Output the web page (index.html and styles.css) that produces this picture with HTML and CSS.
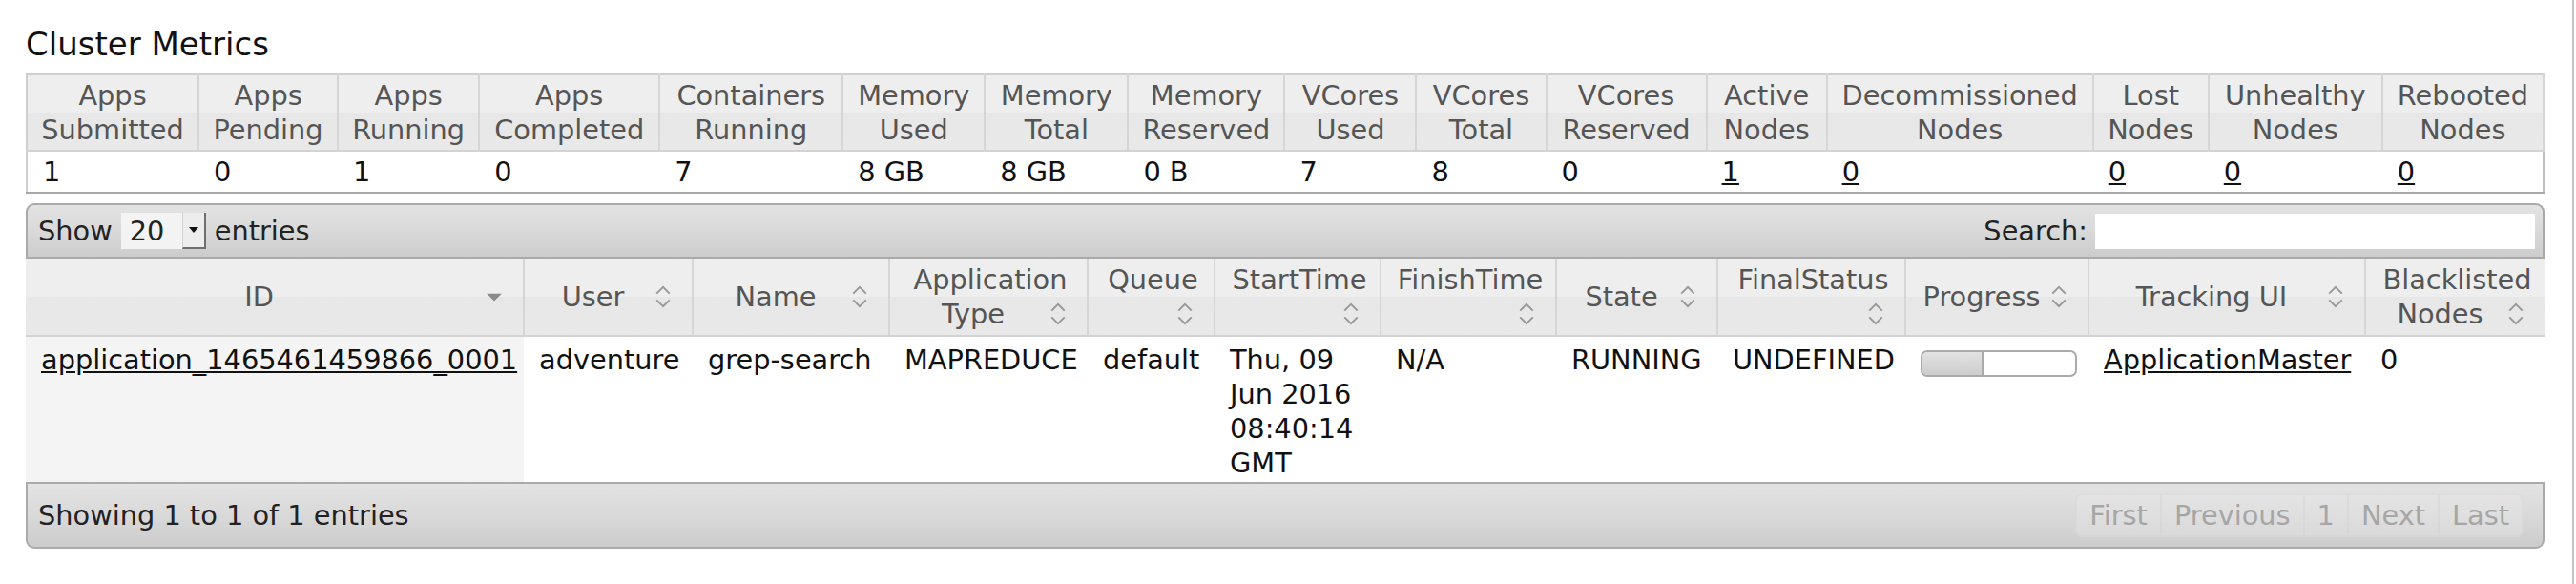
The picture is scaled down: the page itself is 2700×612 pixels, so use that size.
FILE: index.html
```html
<!DOCTYPE html>
<html>
<head>
<meta charset="utf-8">
<title>Cluster Metrics</title>
<link rel="stylesheet" href="styles.css">
</head>
<body>
<div class="page">
  <h3 class="title">Cluster Metrics</h3>
  <table class="metrics">
    <colgroup><col><col><col><col><col><col><col><col><col><col><col><col><col><col><col><col></colgroup>
    <thead>
      <tr>
        <th>Apps Submitted</th><th>Apps Pending</th><th>Apps Running</th><th>Apps Completed</th>
        <th>Containers Running</th><th>Memory Used</th><th>Memory Total</th><th>Memory Reserved</th>
        <th>VCores Used</th><th>VCores Total</th><th>VCores Reserved</th><th>Active Nodes</th>
        <th>Decommissioned Nodes</th><th>Lost Nodes</th><th>Unhealthy Nodes</th><th>Rebooted Nodes</th>
      </tr>
    </thead>
    <tbody>
      <tr>
        <td>1</td><td>0</td><td>1</td><td>0</td><td>7</td><td>8 GB</td><td>8 GB</td><td>0 B</td>
        <td>7</td><td>8</td><td>0</td><td><a href="#">1</a></td><td><a href="#">0</a></td>
        <td><a href="#">0</a></td><td><a href="#">0</a></td><td><a href="#">0</a></td>
      </tr>
    </tbody>
  </table>

  <div class="dt">
    <div class="bar bar-top">
      <div class="length">Show <span class="select"><span class="select-val">20</span><span class="select-btn"><svg width="10" height="6" viewBox="0 0 10 6"><polygon points="0,0 10,0 5,6" fill="#111"/></svg></span></span> entries</div>
      <div class="filter">Search: <span class="search"></span></div>
    </div>
    <table class="apps">
      <colgroup><col><col><col><col><col><col><col><col><col><col><col><col></colgroup>
      <thead>
        <tr>
          <th>ID<span class="sicon"><svg width="36" height="36" viewBox="0 0 16 16"><polygon points="4.5,6.5 11.5,6.5 8,10" fill="#8a8a8a"/></svg></span></th>
          <th>User<span class="sicon"><svg width="36" height="36" viewBox="0 0 16 16"><path d="M5 6.5 L8 3.5 L11 6.5 M5 9.5 L8 12.5 L11 9.5" fill="none" stroke="#999" stroke-width="0.9"/></svg></span></th>
          <th>Name<span class="sicon"><svg width="36" height="36" viewBox="0 0 16 16"><path d="M5 6.5 L8 3.5 L11 6.5 M5 9.5 L8 12.5 L11 9.5" fill="none" stroke="#999" stroke-width="0.9"/></svg></span></th>
          <th>Application Type<span class="sicon"><svg width="36" height="36" viewBox="0 0 16 16"><path d="M5 6.5 L8 3.5 L11 6.5 M5 9.5 L8 12.5 L11 9.5" fill="none" stroke="#999" stroke-width="0.9"/></svg></span></th>
          <th>Queue<span class="sicon"><svg width="36" height="36" viewBox="0 0 16 16"><path d="M5 6.5 L8 3.5 L11 6.5 M5 9.5 L8 12.5 L11 9.5" fill="none" stroke="#999" stroke-width="0.9"/></svg></span></th>
          <th>StartTime<span class="sicon"><svg width="36" height="36" viewBox="0 0 16 16"><path d="M5 6.5 L8 3.5 L11 6.5 M5 9.5 L8 12.5 L11 9.5" fill="none" stroke="#999" stroke-width="0.9"/></svg></span></th>
          <th>FinishTime<span class="sicon"><svg width="36" height="36" viewBox="0 0 16 16"><path d="M5 6.5 L8 3.5 L11 6.5 M5 9.5 L8 12.5 L11 9.5" fill="none" stroke="#999" stroke-width="0.9"/></svg></span></th>
          <th>State<span class="sicon"><svg width="36" height="36" viewBox="0 0 16 16"><path d="M5 6.5 L8 3.5 L11 6.5 M5 9.5 L8 12.5 L11 9.5" fill="none" stroke="#999" stroke-width="0.9"/></svg></span></th>
          <th>FinalStatus<span class="sicon"><svg width="36" height="36" viewBox="0 0 16 16"><path d="M5 6.5 L8 3.5 L11 6.5 M5 9.5 L8 12.5 L11 9.5" fill="none" stroke="#999" stroke-width="0.9"/></svg></span></th>
          <th>Progress<span class="sicon"><svg width="36" height="36" viewBox="0 0 16 16"><path d="M5 6.5 L8 3.5 L11 6.5 M5 9.5 L8 12.5 L11 9.5" fill="none" stroke="#999" stroke-width="0.9"/></svg></span></th>
          <th>Tracking UI<span class="sicon"><svg width="36" height="36" viewBox="0 0 16 16"><path d="M5 6.5 L8 3.5 L11 6.5 M5 9.5 L8 12.5 L11 9.5" fill="none" stroke="#999" stroke-width="0.9"/></svg></span></th>
          <th>Blacklisted Nodes<span class="sicon"><svg width="36" height="36" viewBox="0 0 16 16"><path d="M5 6.5 L8 3.5 L11 6.5 M5 9.5 L8 12.5 L11 9.5" fill="none" stroke="#999" stroke-width="0.9"/></svg></span></th>
        </tr>
      </thead>
      <tbody>
        <tr>
          <td class="sorted"><a href="#">application_1465461459866_0001</a></td>
          <td>adventure</td>
          <td>grep-search</td>
          <td>MAPREDUCE</td>
          <td>default</td>
          <td>Thu, 09 Jun 2016 08:40:14 GMT</td>
          <td>N/A</td>
          <td>RUNNING</td>
          <td>UNDEFINED</td>
          <td><div class="progress" title="40.0%"><div class="progress-value" style="width:40%"></div></div></td>
          <td><a href="#">ApplicationMaster</a></td>
          <td>0</td>
        </tr>
      </tbody>
    </table>
    <div class="bar bar-bottom">
      <div class="info">Showing 1 to 1 of 1 entries</div>
      <div class="paginate">
        <span class="pbtn pfirst">First</span><span class="pbtn">Previous</span><span class="pbtn">1</span><span class="pbtn">Next</span><span class="pbtn plast">Last</span>
      </div>
    </div>
  </div>
</div>
</body>
</html>
```

FILE: styles.css
```css
html, body {
  margin: 0;
  padding: 0;
  background: #fff;
}

body {
  font-family: "DejaVu Sans", sans-serif;
  font-size: 28.8px;
  color: #222;
}

.page {
  box-sizing: border-box;
  width: 2698px;
  height: 612px;
  padding: 26px 0 0 27px;
  border-right: 2px solid #c4c4c4;
}

.title {
  margin: 0;
  font-size: 34px;
  font-weight: normal;
  line-height: 40px;
  color: #111;
}

a {
  color: #111;
  text-decoration: underline;
}

/* ---------- metrics ---------- */
.metrics {
  margin-top: 11px;
  width: 2640px;
  table-layout: fixed;
  border-collapse: collapse;
  border: 2px solid #cfcfcf;
  border-bottom-color: #a8a8a8;
  border-right-color: #bdbdbd;
}

.metrics col:nth-child(1) { width: 180px; }
.metrics col:nth-child(2) { width: 146px; }
.metrics col:nth-child(3) { width: 148px; }
.metrics col:nth-child(4) { width: 189px; }
.metrics col:nth-child(5) { width: 192px; }
.metrics col:nth-child(6) { width: 149px; }
.metrics col:nth-child(7) { width: 150px; }
.metrics col:nth-child(8) { width: 164px; }
.metrics col:nth-child(9) { width: 138px; }
.metrics col:nth-child(10) { width: 136px; }
.metrics col:nth-child(11) { width: 168px; }
.metrics col:nth-child(12) { width: 126px; }
.metrics col:nth-child(13) { width: 279px; }
.metrics col:nth-child(14) { width: 121px; }
.metrics col:nth-child(15) { width: 182px; }
.metrics col:nth-child(16) { width: 169px; }

.metrics th {
  font-weight: normal;
  color: #555;
  padding: 3px 0;
  line-height: 36px;
  text-align: center;
  vertical-align: middle;
  background: linear-gradient(to bottom, #eeeeee 0, #eeeeee 50%, #e7e7e7 50%, #e9e9e9 100%);
  border-right: 2px solid #d6d6d6;
  border-bottom: 2px solid #d3d3d3;
}

.metrics td {
  padding: 4px 16px;
  line-height: 34px;
  color: #111;
  background: #fff;
}

/* ---------- datatable wrapper ---------- */
.dt {
  margin-top: 10px;
  width: 2640px;
}

.bar {
  display: flex;
  align-items: center;
  justify-content: space-between;
  box-sizing: border-box;
  border: 2px solid #aaa;
  background: linear-gradient(to bottom, #e3e3e3 0, #d9d9d9 50%, #cccccc 100%);
  color: #222;
  line-height: 34px;
}

.bar-top {
  height: 58px;
  padding: 0 8px 0 11px;
  border-radius: 9px 9px 0 0;
}

.bar-bottom {
  height: 70px;
  padding: 0 20px 0 11px;
  border-radius: 0 0 9px 9px;
}

.length {
  display: flex;
  align-items: center;
  gap: 9px;
}

.select {
  display: inline-flex;
  align-items: stretch;
  height: 38px;
  width: 89px;
  box-sizing: border-box;
  background: #f3f3f3;
}

.select-val {
  flex: 1;
  padding-left: 9px;
  line-height: 38px;
}

.select-btn {
  width: 25px;
  box-sizing: border-box;
  display: flex;
  align-items: center;
  justify-content: center;
  background: #ededed;
  border-left: 1px solid #d0d0d0;
  border-right: 2px solid #6f6f6f;
  border-bottom: 2px solid #6f6f6f;
}

.filter {
  display: flex;
  align-items: center;
  gap: 8px;
}

.search {
  display: block;
  width: 461px;
  height: 37px;
  background: #fff;
}

/* ---------- apps table ---------- */
.apps {
  width: 2640px;
  table-layout: fixed;
  border-collapse: collapse;
}

.apps col:nth-child(1) { width: 522px; }
.apps col:nth-child(2) { width: 177px; }
.apps col:nth-child(3) { width: 206px; }
.apps col:nth-child(4) { width: 208px; }
.apps col:nth-child(5) { width: 133px; }
.apps col:nth-child(6) { width: 174px; }
.apps col:nth-child(7) { width: 184px; }
.apps col:nth-child(8) { width: 169px; }
.apps col:nth-child(9) { width: 197px; }
.apps col:nth-child(10) { width: 192px; }
.apps col:nth-child(11) { width: 290px; }
.apps col:nth-child(12) { width: 188px; }

.apps th {
  font-weight: normal;
  color: #555;
  padding: 4px 12px 4px 16px;
  line-height: 36px;
  text-align: center;
  vertical-align: middle;
  background: linear-gradient(to bottom, #eeeeee 0, #eeeeee 50%, #e7e7e7 50%, #e9e9e9 100%);
  border-right: 2px solid #d6d6d6;
  border-bottom: 2px solid #d3d3d3;
}

.apps th:last-child {
  border-right: none;
}

.sicon {
  float: right;
  width: 36px;
  height: 36px;
  display: flex;
  align-items: center;
  justify-content: center;
}

.sicon svg {
  display: block;
}

.apps td {
  padding: 6px 16px 2px;
  line-height: 36px;
  vertical-align: top;
  color: #111;
  background: #fff;
}

.apps td.sorted {
  background: #f4f4f4;
}

.progress {
  margin-top: 8px;
  width: 164px;
  height: 28px;
  box-sizing: border-box;
  border: 2px solid #aaa;
  border-radius: 7px;
  background: #fff;
  overflow: hidden;
}

.progress-value {
  height: 100%;
  box-sizing: border-box;
  background: linear-gradient(to bottom, #e2e2e2, #cdcdcd);
  border-right: 2px solid #aaa;
}

/* ---------- footer ---------- */
.paginate {
  display: flex;
  align-items: stretch;
  border-radius: 7px;
}

.pbtn {
  padding: 4px 13px;
  line-height: 34px;
  color: #a6a6a6;
  background: rgba(235, 235, 235, 0.35);
  border: 2px solid rgba(211, 211, 211, 0.45);
  border-left: none;
}

.pbtn.pfirst {
  border-left: 2px solid rgba(211, 211, 211, 0.45);
  border-radius: 7px 0 0 7px;
}

.pbtn.plast {
  border-radius: 0 7px 7px 0;
}
```
